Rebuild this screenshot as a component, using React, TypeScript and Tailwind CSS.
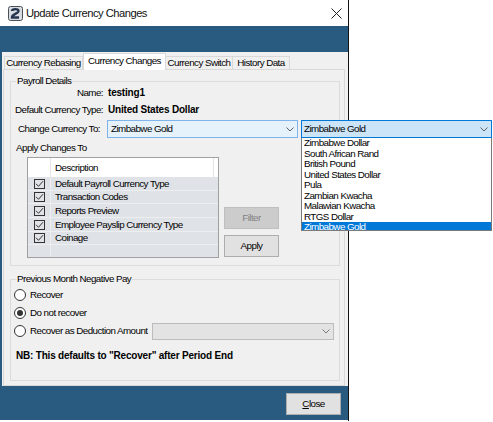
import React from "react";

const Chevron = ({ color = "#606060" }: { color?: string }) => (
  <svg width="8" height="5" viewBox="0 0 8 5" className="shrink-0">
    <path d="M0.5 0.5 L4 4 L7.5 0.5" fill="none" stroke={color} strokeWidth="1" />
  </svg>
);

const Radio = ({ checked }: { checked?: boolean }) => (
  <span className="w-[12px] h-[12px] rounded-full border border-[#333333] bg-white flex items-center justify-center shrink-0">
    {checked && <span className="w-[6px] h-[6px] rounded-full bg-[#333333]" />}
  </span>
);

const Check = () => (
  <span className="w-[11px] h-[10px] border border-[#333333] flex items-center justify-center">
    <svg width="9" height="8" viewBox="0 0 9 8">
      <path d="M1 3.8 L3.5 6.3 L8 1.2" fill="none" stroke="#333333" strokeWidth="1" />
    </svg>
  </span>
);

const rows: { label: string; h: string }[] = [
  { label: "Default Payroll Currency Type", h: "h-[14px]" },
  { label: "Transaction Codes", h: "h-[13px]" },
  { label: "Reports Preview", h: "h-[14px]" },
  { label: "Employee Payslip Currency Type", h: "h-[14px]" },
  { label: "Coinage", h: "h-[13px]" },
];

const items = [
  "Zimbabwe Dollar",
  "South African Rand",
  "British Pound",
  "United States Dollar",
  "Pula",
  "Zambian Kwacha",
  "Malawian Kwacha",
  "RTGS Dollar",
];

export default function App() {
  const bold = "font-bold text-[10px] tracking-[-0.2px]";
  return (
    <div className="w-[493px] h-[422px] bg-white relative overflow-hidden font-['Liberation_Sans',Arial,sans-serif] text-[9.8px] tracking-[-0.55px] leading-[12px] text-black whitespace-nowrap">
      <div className="w-[349px] h-[421px] flex flex-col border-r border-[#111111]">
        {/* title bar */}
        <div className="h-[26px] flex items-center bg-white">
          <svg width="15" height="15" viewBox="0 0 15 15" className="ml-[8px] shrink-0">
            <rect x="0.5" y="0.5" width="14" height="14" rx="2" fill="#d9dde2" stroke="#4b5058" />
            <path d="M4 5 C4 2.5 10.5 2.5 10.5 5.2 C10.5 7.5 4 8 4 11.5 L11 11.5" fill="none" stroke="#27364f" strokeWidth="2.4" />
          </svg>
          <span className="ml-[3px] text-[11.2px] tracking-[-0.5px] text-[#111111]">Update Currency Changes</span>
          <svg width="11" height="11" viewBox="0 0 11 11" className="ml-auto mr-[6px]">
            <path d="M0.5 0.5 L10.5 10.5 M10.5 0.5 L0.5 10.5" stroke="#222222" strokeWidth="1" />
          </svg>
        </div>
        {/* top blue band */}
        <div className="h-[26px] bg-[#295a7f]" />
        {/* tab control */}
        <div className="h-[334px] flex bg-[#295a7f]">
          <div className="ml-[2px] w-[346px] bg-[#f0f0f0] pt-[1px] flex flex-col">
            <div className="h-[16px] flex items-end pl-[2px]">
              <div className="w-[79px] h-[13px] border border-b-0 border-[#d9d9d9] flex items-center justify-center">
                Currency Rebasing
              </div>
              <div className="w-[83px] h-[17px] -mb-[1px] relative z-10 bg-white border border-b-0 border-[#d9d9d9] flex items-center justify-center pb-[2px]">
                Currency Changes
              </div>
              <div className="w-[67px] h-[13px] border border-b-0 border-l-0 border-[#d9d9d9] flex items-center justify-center">
                Currency Switch
              </div>
              <div className="w-[57px] h-[13px] border border-b-0 border-l-0 border-[#d9d9d9] flex items-center justify-center">
                History Data
              </div>
            </div>
            <div className="ml-[1px] w-[342px] h-[317px] border border-[#d9d9d9] bg-[#f0f0f0] overflow-hidden">
              {/* Payroll Details */}
              <fieldset className="mt-[5px] ml-[6px] w-[330px] border border-[#dcdcdc] pb-[7px]">
                <legend className="ml-[5px] px-[1px] leading-[12px]">Payroll Details</legend>
                <div className="h-[12px] flex items-center">
                  <span className="w-[92px] text-right">Name:</span>
                  <span className={`ml-[5px] ${bold}`}>testing1</span>
                </div>
                <div className="mt-[5px] h-[12px] flex items-center">
                  <span className="w-[92px] text-right">Default Currency Type:</span>
                  <span className={`ml-[5px] ${bold}`}>United States Dollar</span>
                </div>
                <div className="mt-[4px] h-[18px] flex items-center">
                  <span className="w-[89px] text-right">Change Currency To:</span>
                  <div className="ml-[7px] w-[191px] h-[18px] bg-[#e5f1fb] border border-[#7eb4ea] flex items-center pl-[3px] pr-[3px]">
                    <span className="flex-1">Zimbabwe Gold</span>
                    <Chevron />
                  </div>
                </div>
                <div className="mt-[4px] ml-[5px] h-[12px] flex items-center">Apply Changes To</div>
                <div className="mt-[3px] ml-[16px] flex items-end">
                  <div className="w-[192px] h-[101px] border border-[#a0a0a0] bg-[#d7dbe0] flex flex-col">
                    <div className="h-[19px] bg-white flex shrink-0">
                      <div className="w-[23px] border-r border-[#e5e5e5]" />
                      <div className="w-[163px] border-r border-[#e5e5e5] flex items-center pl-[4px]">Description</div>
                    </div>
                    {rows.map((r) => (
                      <div key={r.label} className={`${r.h} flex bg-[#dfe2e7] border-b border-[#edeef0] shrink-0`}>
                        <div className="w-[23px] border-r border-[#edeef0] flex items-center justify-center">
                          <Check />
                        </div>
                        <div className="flex-1 flex items-center pl-[4px]">{r.label}</div>
                      </div>
                    ))}
                    <div className="flex-1 flex bg-[#dfe2e7]">
                      <div className="w-[23px] border-r border-[#edeef0]" />
                    </div>
                  </div>
                  <div className="ml-[5px] flex flex-col gap-[6px] mb-[1px]">
                    <div className="w-[55px] h-[22px] bg-[#cccccc] border border-[#bfbfbf] flex items-center justify-center text-[#838383]">
                      Filter
                    </div>
                    <div className="w-[55px] h-[22px] bg-[#e1e1e1] border border-[#adadad] flex items-center justify-center">
                      Apply
                    </div>
                  </div>
                </div>
              </fieldset>
              {/* Previous Month Negative Pay */}
              <fieldset className="mt-[7px] ml-[6px] w-[330px] border border-[#dcdcdc] pb-[18px]">
                <legend className="ml-[5px] px-[1px] leading-[12px]">Previous Month Negative Pay</legend>
                <div className="mt-[1px]">
                  <div className="h-[18px] flex items-center pl-[3px]">
                    <Radio />
                    <span className="ml-[4px]">Recover</span>
                  </div>
                  <div className="h-[18px] flex items-center pl-[3px]">
                    <Radio checked />
                    <span className="ml-[4px]">Do not recover</span>
                  </div>
                  <div className="h-[18px] flex items-center pl-[3px]">
                    <Radio />
                    <span className="ml-[4px] w-[122px]">Recover as Deduction Amount</span>
                    <div className="w-[182px] h-[17px] bg-[#e3e3e3] border border-[#bcbcbc] flex items-center justify-end pr-[3px]">
                      <Chevron color="#7a7a7a" />
                    </div>
                  </div>
                </div>
                <div className={`mt-[10px] ml-[5px] h-[12px] flex items-center ${bold}`}>
                  NB: This defaults to "Recover" after Period End
                </div>
              </fieldset>
            </div>
          </div>
        </div>
        {/* bottom blue band */}
        <div className="h-[34px] bg-[#295a7f] flex justify-end items-start pt-[7px] pr-[7px]">
          <div className="w-[55px] h-[22px] bg-[#e1e1e1] border border-[#adadad] flex items-center justify-center">
            <span>
              <span className="underline">C</span>lose
            </span>
          </div>
        </div>
      </div>

      {/* open dropdown overlay */}
      <div className="absolute left-[301px] top-[120px] w-[191px]">
        <div className="h-[18px] bg-[#cce4f7] border border-[#0078d7] flex items-center pl-[2px] pr-[3px]">
          <span className="flex-1">Zimbabwe Gold</span>
          <Chevron />
        </div>
        <div className="h-[93px] bg-white border border-t-0 border-[#7a7a7a] overflow-hidden">
          {items.map((it) => (
            <div key={it} className="h-[10.5px] leading-[10.5px] pl-[2px]">
              {it}
            </div>
          ))}
          <div className="h-[10.5px] leading-[10.5px] pl-[2px] bg-[#0078d7] text-white">
            Zimbabwe Gold
          </div>
        </div>
      </div>
    </div>
  );
}
